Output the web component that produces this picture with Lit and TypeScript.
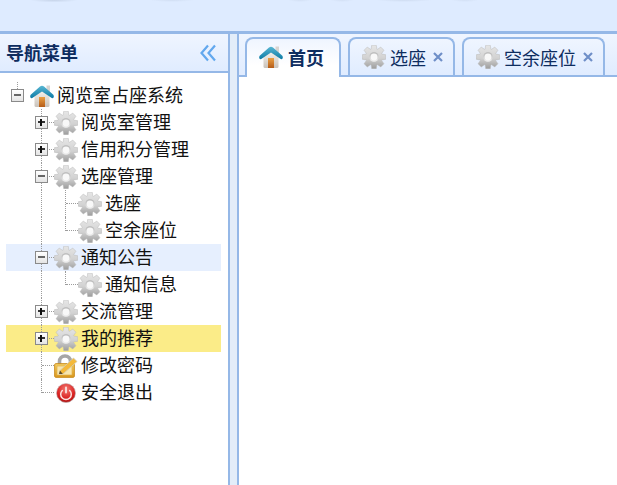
import { LitElement, html, css, svg, nothing } from "lit";
import { customElement } from "lit/decorators.js";

type Cell = "blank" | "v" | "tee" | "end" | "stub";
interface Row { cells: Cell[]; box?: "plus" | "minus"; icon: "gear" | "home" | "lock" | "exit"; text: string; cls?: string; }

const gearPath = (() => {
  const c = 12, teeth = 8;
  const pts: string[] = [];
  for (let i = 0; i < teeth; i++) {
    const a = (i / teeth) * Math.PI * 2;
    const w = Math.PI / teeth;
    const p = (r: number, t: number) => `${(c + r * Math.cos(t)).toFixed(2)} ${(c + r * Math.sin(t)).toFixed(2)}`;
    pts.push(p(8.4, a - w * 0.9), p(12, a - w * 0.48), p(12, a + w * 0.48), p(8.4, a + w * 0.9));
  }
  return "M" + pts.join("L") + "Z";
})();

const gear = html`<svg class="icon" viewBox="0 0 24 24">
  <defs>
    <linearGradient id="g1" x1="0" y1="0" x2="0" y2="1"><stop offset="0" stop-color="#e6e6e6"/><stop offset=".55" stop-color="#d2d2d2"/><stop offset="1" stop-color="#9c9c9c"/></linearGradient>
    <linearGradient id="g2" x1="0" y1="0" x2="0" y2="1"><stop offset="0" stop-color="#b4b4b4"/><stop offset="1" stop-color="#f0f0f0"/></linearGradient>
  </defs>
  <path d=${gearPath} fill="url(#g1)" stroke="#b8b8b8" stroke-width=".5"/>
  <circle cx="12" cy="12" r="4.800" fill="url(#g2)"/>
  <circle cx="12" cy="12" r="3.400" fill="#f8f8f8"/>
</svg>`;

const home = html`<svg class="icon" viewBox="0 0 24 24">
  <defs>
    <linearGradient id="h1" x1="0" y1="0" x2="0" y2="1"><stop offset="0" stop-color="#58b6d2"/><stop offset="1" stop-color="#0d7ba6"/></linearGradient>
    <linearGradient id="h2" x1="0" y1="0" x2="0" y2="1"><stop offset="0" stop-color="#f8f4ee"/><stop offset="1" stop-color="#c9c2ba"/></linearGradient>
    <linearGradient id="h3" x1="0" y1="0" x2="0" y2="1"><stop offset="0" stop-color="#ea9f42"/><stop offset="1" stop-color="#b55c18"/></linearGradient>
  </defs>
  <path d="M16.500 1.500h3.500v8h-3.500z" fill="#d8d4d0"/>
  <path d="M4.500 11 12 6l7.500 5V21.500q0 1.500-1.500 1.500H6q-1.500 0-1.500-1.500z" fill="url(#h2)"/>
  <rect x="9" y="13" width="6" height="10" fill="url(#h3)"/>
  <path d="M.4 13.500 Q-.4 11.500 1.500 10 L10 2.500 Q12 1 14 2.500 L22.500 10 Q24.400 11.500 23.600 13.500 Q22.500 14.800 21 13.500 L12 7.500 L3 13.500 Q1.500 14.800 .4 13.500Z" fill="url(#h1)"/>
</svg>`;

const lock = html`<svg class="icon" viewBox="0 0 24 24">
  <defs>
    <linearGradient id="l1" x1="0" y1="0" x2="0" y2="1"><stop offset="0" stop-color="#f8d468"/><stop offset="1" stop-color="#dc9a1f"/></linearGradient>
  </defs>
  <path d="M5.500 11V7.500a5.500 5.500 0 0 1 11 0V11" fill="none" stroke="#a6a6a6" stroke-width="3.600"/>
  <rect x=".7" y="9.700" width="19.600" height="13.600" rx="1" fill="url(#l1)" stroke="#c98a1c"/>
  <rect x="3" y="12" width="15" height="9" fill="#f8e6ad" stroke="#d9a63d" stroke-width=".6"/>
  <path d="M5 20 6 16.500 19.500 4 23 7.500 9 20z" fill="#f4b93a" stroke="#d2cbb8" stroke-width=".8"/>
  <path d="M5 20 6 16.500 8.800 20z" fill="#5c4a2a"/>
</svg>`;

const exit = html`<svg class="icon" viewBox="0 0 24 24">
  <defs>
    <radialGradient id="e1" cx=".5" cy=".3" r=".75"><stop offset="0" stop-color="#f47c74"/><stop offset=".65" stop-color="#d92020"/><stop offset="1" stop-color="#a01010"/></radialGradient>
  </defs>
  <circle cx="12" cy="12" r="9.500" fill="url(#e1)" stroke="#bdb4b4" stroke-width=".6"/>
  <path d="M8.300 9.500a5.300 5.300 0 1 0 7.400 0" fill="none" stroke="#fbe4e2" stroke-width="1.500" stroke-linecap="round"/>
  <path d="M12 6.500v5" fill="none" stroke="#fbe4e2" stroke-width="1.800" stroke-linecap="round"/>
</svg>`;

const icons = { gear, home, lock, exit };

const rows: Row[] = [
  { cells: ["stub"], box: "minus", icon: "home", text: "阅览室占座系统" },
  { cells: ["blank", "tee"], box: "plus", icon: "gear", text: "阅览室管理" },
  { cells: ["blank", "tee"], box: "plus", icon: "gear", text: "信用积分管理" },
  { cells: ["blank", "tee"], box: "minus", icon: "gear", text: "选座管理" },
  { cells: ["blank", "v", "tee"], icon: "gear", text: "选座" },
  { cells: ["blank", "v", "end"], icon: "gear", text: "空余座位" },
  { cells: ["blank", "tee"], box: "minus", icon: "gear", text: "通知公告", cls: "hover" },
  { cells: ["blank", "v", "end"], icon: "gear", text: "通知信息" },
  { cells: ["blank", "tee"], box: "plus", icon: "gear", text: "交流管理" },
  { cells: ["blank", "tee"], box: "plus", icon: "gear", text: "我的推荐", cls: "selected" },
  { cells: ["blank", "tee"], icon: "lock", text: "修改密码" },
  { cells: ["blank", "end"], icon: "exit", text: "安全退出" },
];

const tabs = [
  { text: "首页", icon: home, active: true },
  { text: "选座", icon: gear, closable: true },
  { text: "空余座位", icon: gear, closable: true },
];

@customElement("app-root")
export class AppRoot extends LitElement {
  static styles = css`
    :host {
      display: flex;
      flex-direction: column;
      height: 100vh;
      overflow: hidden;
      background: #fff;
      font-family: "Noto Sans CJK SC", "Liberation Sans", sans-serif;
      font-size: 18px;
      color: #111;
    }
    .top {
      height: 31px; flex: none; border-bottom: 3px solid #95b8e7;
      background-color: #deebff;
      background-image:
        radial-gradient(24px 2.500px at 54px 0, rgba(110,125,150,.22), transparent),
        radial-gradient(22px 2px at 172px 0, rgba(110,125,150,.12), transparent),
        radial-gradient(12px 2px at 300px 0, rgba(110,125,150,.1), transparent),
        radial-gradient(12px 2px at 342px 0, rgba(110,125,150,.1), transparent),
        radial-gradient(28px 2px at 404px 0, rgba(110,125,150,.14), transparent),
        radial-gradient(14px 2px at 465px 0, rgba(110,125,150,.1), transparent);
    }
    .main { flex: 1; display: flex; min-height: 0; }
    .west { width: 228px; flex: none; border-right: 2px solid #95b8e7; display: flex; flex-direction: column; }
    .west-head {
      height: 37px; flex: none; display: flex; align-items: center; justify-content: space-between;
      padding: 0 12px 0 6px; border-bottom: 2px solid #95b8e7;
      background: linear-gradient(#eff5ff, #e0ecff);
      font-weight: 700; color: #0e2d5f; line-height: 37px;
    }
    .collapse { width: 16px; height: 18px; display: block; }
    .tree { padding: 9px 7px 0 6px; }
    .row { display: flex; align-items: center; height: 27px; line-height: 27px; white-space: nowrap; }
    .row.hover { background: #e6effe; }
    .row.selected { background: #fbec88; }
    .cell { width: 24px; height: 27px; flex: none; position: relative; }
    .cell.v::before, .cell.tee::before, .cell.end::before, .cell.stub::before {
      content: ""; position: absolute; left: 11px; top: 0; bottom: 0; border-left: 1px dotted #9c9c9c;
    }
    .cell.end::before { bottom: 13px; }
    .cell.stub::before { bottom: 20px; }
    .cell.tee::after, .cell.end::after {
      content: ""; position: absolute; left: 12px; right: 0; top: 13px; border-top: 1px dotted #9c9c9c;
    }
    .box {
      position: absolute; left: 5px; top: 7px; width: 11px; height: 11px; z-index: 1;
      border: 1px solid #8a8a8a; background: linear-gradient(#fff, #e4e4e4);
      display: block;
    }
    .box::before { content: ""; position: absolute; left: 2px; right: 2px; top: 4px; height: 2px; background: #333; }
    .box.plus::after { content: ""; position: absolute; top: 2px; bottom: 2px; left: 4px; width: 2px; background: #111; }
    .box.minus::before { background: #666; }
    .icon { width: 24px; height: 24px; flex: none; display: block; filter: blur(.45px); }
    .label { margin-left: 3px; position: relative; top: -1px; }

    .split { width: 7px; flex: none; background: #e3edf9; }
    .center { flex: 1; min-width: 0; display: flex; flex-direction: column; border-left: 2px solid #95b8e7; }
    .strip {
      height: 38px; flex: none; display: flex; align-items: flex-end; gap: 7px;
      padding: 3px 0 0 6px; border-bottom: 2px solid #95b8e7;
      background: linear-gradient(#eff5ff, #e0ecff);
    }
    .tab {
      height: 38px; display: flex; align-items: center; box-sizing: border-box;
      padding: 0 10px 0 12px; border: 2px solid #95b8e7; border-bottom: 0;
      border-radius: 8px 8px 0 0;
      background: linear-gradient(#eff5ff, #e0ecff);
      color: #0e2d5f;
    }
    .tab.active {
      height: 40px; margin-bottom: -2px; padding: 0 15px 2px 12px; position: relative;
      background: linear-gradient(#eff5ff, #fff 70%);
      font-weight: 700;
    }
    .tab .name { margin-left: 4px; }
    .tab.active .name { margin-left: 5px; }
    .close { width: 10px; height: 10px; margin-left: 7px; display: block; }
  `;

  render() {
    return html`
      <div class="top"></div>
      <div class="main">
        <aside class="west">
          <div class="west-head">
            <span>导航菜单</span>
            <svg class="collapse" viewBox="0 0 16 18" fill="none" stroke="#62a8ee" stroke-width="2.200">
              <path d="M8 1.500 1.500 9 8 16.500"/><path d="M15 1.500 8.500 9 15 16.500"/>
            </svg>
          </div>
          <div class="tree">
            ${rows.map((r) => html`
              <div class="row ${r.cls ?? ""}">
                ${r.cells.map((c, i) => html`
                  <span class="cell ${c}">${r.box && i === r.cells.length - 1 ? html`<i class="box ${r.box}"></i>` : nothing}</span>`)}
                ${icons[r.icon]}
                <span class="label">${r.text}</span>
              </div>`)}
          </div>
        </aside>
        <div class="split"></div>
        <section class="center">
          <div class="strip">
            ${tabs.map((t) => html`
              <div class="tab ${t.active ? "active" : ""}">
                ${t.icon}
                <span class="name">${t.text}</span>
                ${t.closable ? html`<svg class="close" viewBox="0 0 10 10">${svg`<path d="M1 1 9 9M9 1 1 9" stroke="#6f8fc8" stroke-width="2.200"/>`}</svg>` : nothing}
              </div>`)}
          </div>
        </section>
      </div>
    `;
  }
}
